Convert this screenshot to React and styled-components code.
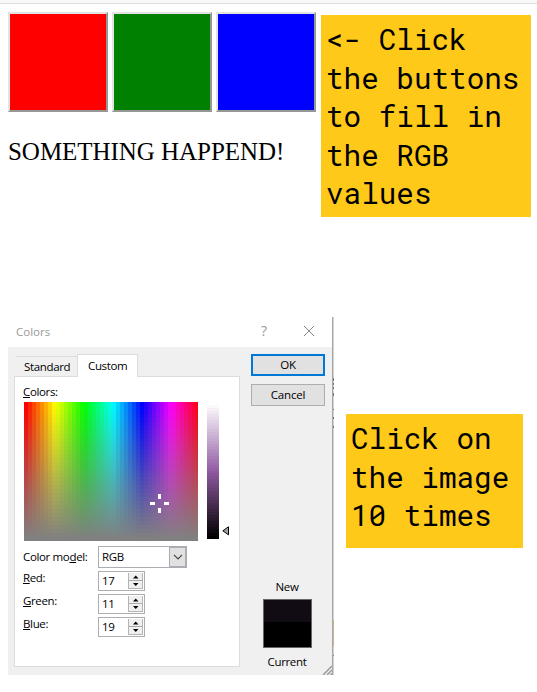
import React from "react";
import styled, { createGlobalStyle, css } from "styled-components";

const GlobalStyle = createGlobalStyle`
  body { margin: 0; background: #fff; color: #000; }
  * { box-sizing: border-box; }
`;

const Page = styled.main`
  width: 537px;
  height: 692px;
  overflow: hidden;
`;

const TopStrip = styled.div`
  height: 4px;
  background: #f8f8f8;
  border-bottom: 1px solid #dedede;
`;

const ButtonSection = styled.section`
  display: flex;
  height: 313px;
  padding: 8px 6px 0 8px;
`;

const Controls = styled.div`
  width: 313px;
`;

const ColorButtons = styled.div`
  display: flex;
  gap: 4px;
`;

const ColorButton = styled.button`
  width: 100px;
  height: 100px;
  padding: 0;
  background: ${(p) => p.$color};
  border: 2px solid;
  border-color: #e3e3e3 #979797 #979797 #e3e3e3;
`;

const Message = styled.p`
  margin: 25px 0 0;
  font: 25px/30px "Liberation Serif", serif;
  letter-spacing: -0.04px;
  white-space: nowrap;
`;

const Note = styled.aside`
  width: ${(p) => p.$width}px;
  height: ${(p) => p.$height}px;
  margin-top: ${(p) => p.$top}px;
  padding: 5px 0 0 5px;
  background: #ffc91a;
  font: 29.3px/38.5px "Roboto Mono", "Liberation Mono", monospace;
  white-space: pre;
`;

const ImageSection = styled.section`
  display: flex;
  gap: 12px;
  padding-left: 8px;
`;

const DialogFrame = styled.div`
  display: flex;
  width: 326px;
  height: 358px;
`;

const Dialog = styled.div`
  width: 325px;
  display: flex;
  flex-direction: column;
  background: #f0f0f0;
  border-right: 1px solid #a8a8a8;
  font: 500 11.5px/16px "Open Sans", "Noto Sans", sans-serif;
  letter-spacing: -0.35px;
  position: relative;
`;

/* Sliver of the window behind the dialog, visible along its right edge. */
const DialogEdge = styled.div`
  width: 1px;
  background:
    linear-gradient(#777, #777) 0 61px / 1px 3px no-repeat,
    linear-gradient(#777, #777) 0 66px / 1px 2px no-repeat,
    linear-gradient(#777, #777) 0 70px / 1px 2px no-repeat,
    linear-gradient(#777, #777) 0 76px / 1px 3px no-repeat,
    linear-gradient(#777, #777) 0 92px / 1px 1px no-repeat,
    linear-gradient(#777, #777) 0 100px / 1px 2px no-repeat,
    linear-gradient(#777, #777) 0 109px / 1px 2px no-repeat,
    linear-gradient(#c8b592, #c8b592) 0 303px / 1px 26px no-repeat,
    linear-gradient(#888, #888) 0 338px / 1px 1px no-repeat,
    #d2d2d2;
`;

const TitleBar = styled.header`
  height: 30px;
  display: flex;
  align-items: center;
  padding: 0 17px 0 8px;
  background: #fff;
  color: #999;
  font-weight: 400;
  letter-spacing: 0;
  svg { margin-left: 36px; margin-top: -2px; }
`;

const Help = styled.span`
  margin-left: auto;
  font-size: 14px;
  margin-top: -2px;
`;

const DialogBody = styled.div`
  flex: 1;
  display: flex;
  gap: 11px;
  padding: 7px 7px 8px 6px;
`;

const TabView = styled.div`
  width: 226px;
  display: flex;
  flex-direction: column;
`;

const Tabs = styled.div`
  display: flex;
  align-items: flex-end;
  padding-left: 2px;
  height: 23px;
  margin-bottom: -1px;
  z-index: 1;
`;

const Tab = styled.div`
  width: 61px;
  height: 20px;
  margin-bottom: 1px;
  padding: 2px 0 0 8px;
  border-top: 1px solid #dcdcdc;
  ${(p) =>
    p.$active &&
    css`
      height: 23px;
      margin-bottom: 0;
      padding-left: 10px;
      padding-top: 3px;
      background: #fff;
      border: 1px solid #dcdcdc;
      border-bottom: 0;
    `}
`;

const Panel = styled.div`
  flex: 1;
  border: 1px solid #dcdcdc;
  background: #fff;
  padding: 7px 0 0 9px;
`;

const Label = styled.div`
  height: 16px;
  margin-left: -1px;
  margin-top: ${(p) => p.$lift || 0}px;
  white-space: nowrap;
`;

const Pickers = styled.div`
  display: flex;
  margin-top: 2px;
  height: 139px;
`;

const Spectrum = styled.div`
  position: relative;
  display: flex;
  width: 174px;
  overflow: hidden;
  &::after {
    content: "";
    position: absolute;
    inset: 0;
    background: linear-gradient(${(p) => p.$fade});
  }
`;

const HueColumn = styled.span`
  flex: 0 0 4px;
`;

const Crosshair = styled.svg`
  position: absolute;
  left: 126px;
  top: 92px;
  z-index: 1;
`;

const LightnessBar = styled.div`
  width: 12px;
  height: 137px;
  margin-left: 9px;
  background: linear-gradient(${(p) => p.$ramp});
`;

const LightnessArrow = styled.svg`
  margin: 124px 0 0 3px;
`;

const Form = styled.div`
  display: grid;
  grid-template-columns: 74px 89px;
  grid-template-rows: 22px 20px 20px 20px;
  row-gap: 3px;
  margin-top: 5px;
`;

const Select = styled.div`
  display: flex;
  border: 1px solid #abadb3;
  padding-left: 3px;
  line-height: 20px;
`;

const SelectArrow = styled.span`
  width: 17px;
  margin-left: auto;
  display: grid;
  place-items: center;
  background: #e1e1e1;
  border: 1px solid #abadb3;
`;

const Spinner = styled.div`
  display: flex;
  width: 47px;
  border: 1px solid #abadb3;
  padding: 1px 1px 1px 3px;
  line-height: 16px;
`;

const SpinButtons = styled.span`
  width: 15px;
  height: 16px;
  margin-left: auto;
  display: grid;
  grid-template-rows: 8px 7px;
  border: 1px solid #b4b4b4;
  border-top: 0;
  background: #f0f0f0;
`;

const SpinButton = styled.span`
  border-bottom: ${(p) => (p.$up ? "1px solid #aaa" : "0")};
  svg { display: block; }
`;

const Side = styled.div`
  flex: 1;
  display: flex;
  flex-direction: column;
  align-items: center;
`;

const DialogButton = styled.button`
  width: 74px;
  height: 22px;
  padding: 0;
  margin-bottom: 8px;
  background: #e1e1e1;
  color: #000;
  font: inherit;
  letter-spacing: -0.2px;
  border: ${(p) => (p.$primary ? "2px solid #0078d7" : "1px solid #adadad")};
`;

const Preview = styled.div`
  margin-top: auto;
  text-align: center;
  margin-bottom: -3px;
  margin-right: 2px;
`;

const PreviewSwatch = styled.div`
  width: 49px;
  height: 49px;
  margin: 4px auto 6px;
  border: 1px solid #666;
  background: linear-gradient(#110b13 22px, #000 22px);
`;

const Grip = styled.svg`
  position: absolute;
  right: 0;
  bottom: 0;
`;

const hues = Array.from({ length: 44 }, (_, i) => `hsl(${(i * 360) / 43.5}, 100%, 50%)`);

/* Hard-edged gradient stops: one flat band per step. */
const bands = (count, height, colorAt) =>
  Array.from({ length: count }, (_, i) => {
    const color = colorAt(i / (count - 1));
    return `${color} ${(i * height) / count}px ${((i + 1) * height) / count}px`;
  }).join(", ");

const fade = bands(35, 139, (t) => `rgba(128, 128, 128, ${t})`);
const ramp = bands(46, 137, (t) => `hsl(285, 28%, ${(1 - t) * 100}%)`);

const channels = [
  ["R", "ed:", 17],
  ["G", "reen:", 11],
  ["B", "lue:", 19],
];

function ColorsDialog() {
  return (
    <DialogFrame>
      <Dialog>
        <TitleBar>
          Colors
          <Help>?</Help>
          <svg width="12" height="12" fill="none" stroke="#888">
            <path d="M1 1l10 10M11 1L1 11" />
          </svg>
        </TitleBar>
        <DialogBody>
          <TabView>
            <Tabs>
              <Tab>Standard</Tab>
              <Tab $active>Custom</Tab>
            </Tabs>
            <Panel>
              <Label><u>C</u>olors:</Label>
              <Pickers>
                <Spectrum $fade={fade}>
                  {hues.map((color) => (
                    <HueColumn key={color} style={{ background: color }} />
                  ))}
                  <Crosshair width="19" height="19" fill="#fff">
                    <path d="M8 0h3v5h-3zM0 8h5v3h-5zM14 8h5v3h-5zM8 14h3v5h-3z" />
                  </Crosshair>
                </Spectrum>
                <LightnessBar $ramp={ramp} />
                <LightnessArrow width="8" height="10" fill="#a0a0a0" stroke="#000">
                  <path d="M6.5 .8v8L.8 4.8z" />
                </LightnessArrow>
              </Pickers>
              <Form>
                <Label $lift={3}>Color mo<u>d</u>el:</Label>
                <Select>
                  RGB
                  <SelectArrow>
                    <svg width="10" height="6" fill="none" stroke="#444" strokeWidth="1.2">
                      <path d="M1 .8l4 4 4-4" />
                    </svg>
                  </SelectArrow>
                </Select>
                {channels.map(([key, rest, value]) => (
                  <React.Fragment key={key}>
                    <Label $lift={-1}><u>{key}</u>{rest}</Label>
                    <Spinner>
                      {value}
                      <SpinButtons>
                        <SpinButton $up>
                          <svg width="13" height="7"><path d="M4 5.5h5.5L6.75 2.5z" /></svg>
                        </SpinButton>
                        <SpinButton>
                          <svg width="13" height="7"><path d="M4 2h5.5L6.75 5z" /></svg>
                        </SpinButton>
                      </SpinButtons>
                    </Spinner>
                  </React.Fragment>
                ))}
              </Form>
            </Panel>
          </TabView>
          <Side>
            <DialogButton $primary>OK</DialogButton>
            <DialogButton>Cancel</DialogButton>
            <Preview>
              New
              <PreviewSwatch />
              Current
            </Preview>
          </Side>
        </DialogBody>
        <Grip width="10" height="10" stroke="#999" strokeWidth="1.5">
          <path d="M1 10L10 1M5 10L10 5M8.5 10L10 8.5" />
        </Grip>
      </Dialog>
      <DialogEdge />
    </DialogFrame>
  );
}

export default function App() {
  return (
    <Page>
      <GlobalStyle />
      <TopStrip />
      <ButtonSection>
        <Controls>
          <ColorButtons>
            <ColorButton $color="#f00" />
            <ColorButton $color="#008000" />
            <ColorButton $color="#00f" />
          </ColorButtons>
          <Message>SOMETHING HAPPEND!</Message>
        </Controls>
        <Note $width={210} $height={202} $top={3}>{"<- Click\nthe buttons\nto fill in\nthe RGB\nvalues"}</Note>
      </ButtonSection>
      <ImageSection>
        <ColorsDialog />
        <Note $width={177} $height={134} $top={97}>{"Click on\nthe image\n10 times"}</Note>
      </ImageSection>
    </Page>
  );
}
